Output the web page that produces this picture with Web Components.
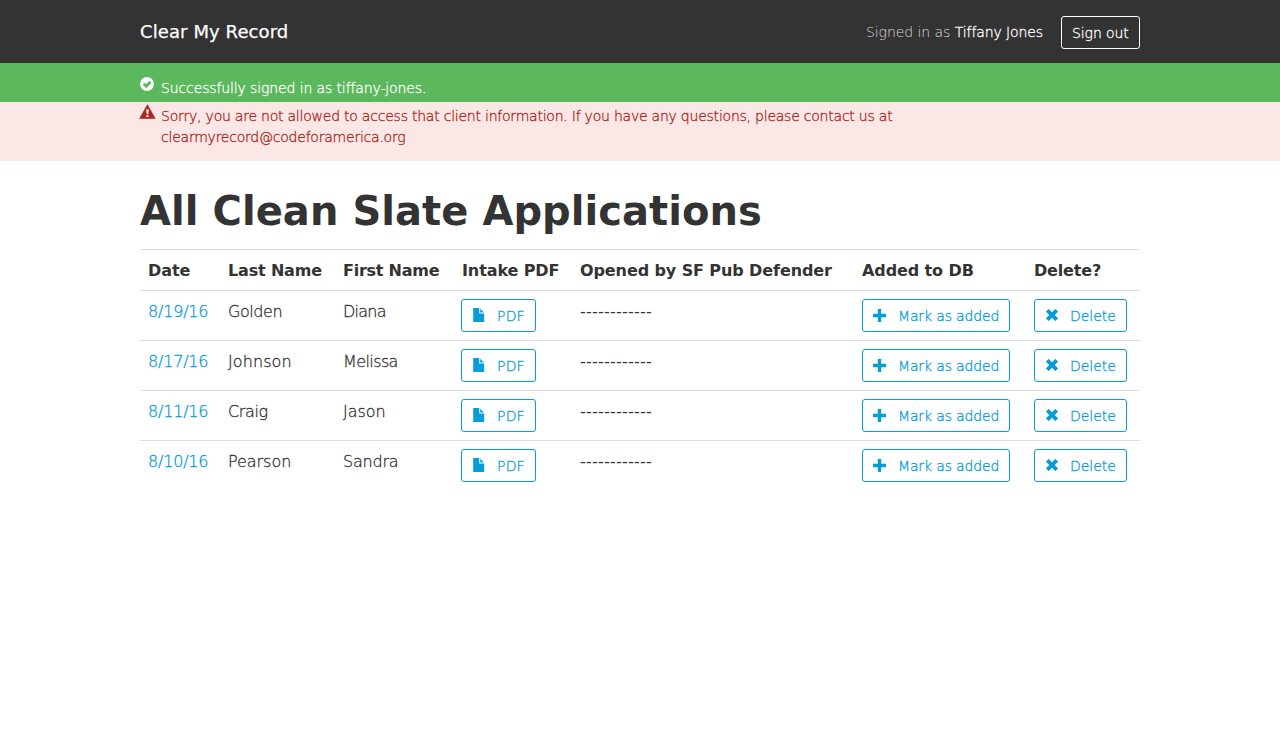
<!DOCTYPE html>
<html lang="en"><head><meta charset="utf-8"><title>Clear My Record</title>
<style>body{margin:0;background:#fff;color:#333;font-family:"DejaVu Sans",sans-serif;font-size:16px;line-height:24px}</style></head>
<body>
<record-app></record-app>
<script>
const define=(name,html)=>customElements.define(name,class extends HTMLElement{
  constructor(){super();this.attachShadow({mode:'open'}).innerHTML=html;}
});
const thin='font-weight:200;-webkit-text-stroke:.3px currentColor;';

define('glyph-check',`<style>:host{display:block;width:14px;height:14px}svg{display:block}</style>
<svg width="14" height="14" viewBox="0 0 14 14"><circle cx="7" cy="7" r="6.9" fill="currentColor"/><path d="M3.7 6.8 6.2 9.2 10.5 4.9" fill="none" stroke="#5cb85c" stroke-width="2.9"/></svg>`);
define('glyph-warning',`<style>:host{display:block;width:17px;height:15px}svg{display:block}</style>
<svg width="17" height="15" viewBox="0 0 17 15"><path d="M8.4 .7 16.3 14.6H.6Z" fill="currentColor" stroke="currentColor" stroke-width=".6" stroke-linejoin="round"/><path d="M7.1 5.4h2.8L9.3 10.2H7.7ZM7.3 11.2h2.4v1.7H7.3Z" fill="#fbe7e5"/></svg>`);
define('glyph-file',`<style>:host{display:block;width:12px;height:14px}svg{display:block}</style>
<svg width="12" height="14" viewBox="0 0 12 14"><path d="M.2 0H6.2V5.5H11.2V14H.2Z" fill="currentColor"/><path d="M7.2.7 10.9 4.6H7.2Z" fill="currentColor"/></svg>`);
define('glyph-plus',`<style>:host{display:block;width:13px;height:13px}svg{display:block}</style>
<svg width="13" height="13" viewBox="0 0 13 13"><path d="M4.8 0H8.2V4.8H13V8.2H8.2V13H4.8V8.2H0V4.8H4.8Z" fill="currentColor"/></svg>`);
define('glyph-remove',`<style>:host{display:block;width:12px;height:12px}svg{display:block}</style>
<svg width="12" height="12" viewBox="0 0 12 12"><path d="M1.3 1.3 10.7 10.7M10.7 1.3 1.3 10.7" fill="none" stroke="currentColor" stroke-width="3.9"/></svg>`);

define('outline-button',`<style>
:host{display:inline-block;box-sizing:border-box;height:33px;border:1px solid currentColor;border-radius:3px;color:#069dd8;font-size:14px;line-height:21px;letter-spacing:var(--track,-.1px);white-space:nowrap;${thin}}
button{all:unset;display:flex;box-sizing:border-box;width:100%;height:31px;padding:6px 10px 4px}
.icon{flex:0 0 var(--slot,0);padding-top:var(--drop,1px);box-sizing:border-box}
</style><button><span class="icon"><slot name="icon"></slot></span><slot></slot></button>`);

define('site-header',`<style>
:host{display:block;background:#333;color:#fff}
.inner{display:flex;width:1000px;height:63px;margin:0 auto;align-items:flex-start}
.brand{flex:1;font-size:18px;line-height:27px;padding-top:18px;letter-spacing:.1px;-webkit-text-stroke:.25px #fff}
.user{font-size:14px;line-height:21px;padding-top:22px;margin-right:18px;letter-spacing:-.1px;${thin}}
.user span{color:#ddd;-webkit-text-stroke:0;letter-spacing:-.05px}
outline-button{margin-top:16px;width:79px;color:#fff}
</style><div class="inner"><div class="brand">Clear My Record</div><div class="user"><span>Signed in as </span>Tiffany Jones</div><outline-button>Sign out</outline-button></div>`);

define('flash-message',`<style>
:host{display:block;font-size:14px;line-height:21px;${thin}}
:host([kind=success]){background:#5cb85c;color:#fff;padding-top:14px;height:25px;letter-spacing:-.12px}
:host([kind=error]){background:#fbe7e5;color:#a82824;padding-top:3px;height:56px;letter-spacing:-.225px}
.inner{display:flex;width:1000px;margin:0 auto}
.icon{flex:0 0 21px}
:host([kind=error]) .icon{margin-left:-1px;flex-basis:22px;margin-top:-1px}
.text{width:780px;padding-top:1px}
</style><div class="inner"><span class="icon"><slot name="icon"></slot></span><span class="text"><slot></slot></span></div>`);

define('application-row',`<style>
:host{display:grid;grid-template-columns:80px 115px 118px 119px 282px 172px 114px;border-top:1px solid #ddd;white-space:nowrap}
:host([head]){font-weight:bold;letter-spacing:-.1px}
:host(:not([head])){letter-spacing:-.2px;${thin}}
::slotted(span){padding:9px 8px 7px}
::slotted(.dashes){font-weight:400;-webkit-text-stroke:0}
::slotted(.intake){padding-left:9px}
::slotted(div){box-sizing:border-box;padding:8px}
</style><slot></slot>`);

const cell=([text,track],name='')=>`<span class="${name}" style="letter-spacing:${track}px">${text}</span>`;
const rows=[
  ['8/19/16',['Golden',-.45],['Diana',-.75]],
  ['8/17/16',['Johnson',.1],['Melissa',-.6]],
  ['8/11/16',['Craig',-.35],['Jason',-.05]],
  ['8/10/16',['Pearson',-.05],['Sandra',-.2]]];
define('application-list',`<style>
:host{display:block;width:1000px;margin:0 auto}
h1{margin:26px 0 14px;font-size:40px;line-height:48px;font-weight:bold;letter-spacing:.05px}
a{color:#069dd8;text-decoration:none}
.act{height:49px}
.act outline-button{display:block}
.pdf{width:75px;--slot:25px;--drop:2px;--track:.2px}
.add{width:148px;--slot:25px;--drop:3px;--track:-.15px}
.del{width:93px;--slot:25px;--drop:3px;--track:-.02px}
.pdf glyph-file,.del glyph-remove{margin-left:1px}
</style><h1>All Clean Slate Applications</h1>
<application-row head><span>Date</span>${cell(['Last Name',-.17])}${cell(['First Name',-.25])}${cell(['Intake PDF',-.1],'intake')}<span>Opened by SF Pub Defender</span><span>Added to DB</span>${cell(['Delete?',-.17])}</application-row>
${rows.map(r=>`<application-row><span><a>${r[0]}</a></span>${cell(r[1])}${cell(r[2])}
<div class="act"><outline-button class="pdf"><glyph-file slot="icon"></glyph-file>PDF</outline-button></div>
${cell(['------------',.22],'dashes')}
<div class="act"><outline-button class="add"><glyph-plus slot="icon"></glyph-plus>Mark as added</outline-button></div>
<div class="act"><outline-button class="del"><glyph-remove slot="icon"></glyph-remove>Delete</outline-button></div></application-row>`).join('')}`);

define('record-app',`<style>:host{display:block}</style>
<site-header></site-header>
<flash-message kind="success"><glyph-check slot="icon"></glyph-check>Successfully signed in as tiffany-jones.</flash-message>
<flash-message kind="error"><glyph-warning slot="icon"></glyph-warning>Sorry, you are not allowed to access that client information. If you have any questions, please contact us at clearmyrecord@codeforamerica.org</flash-message>
<application-list></application-list>`);
</script></body></html>
